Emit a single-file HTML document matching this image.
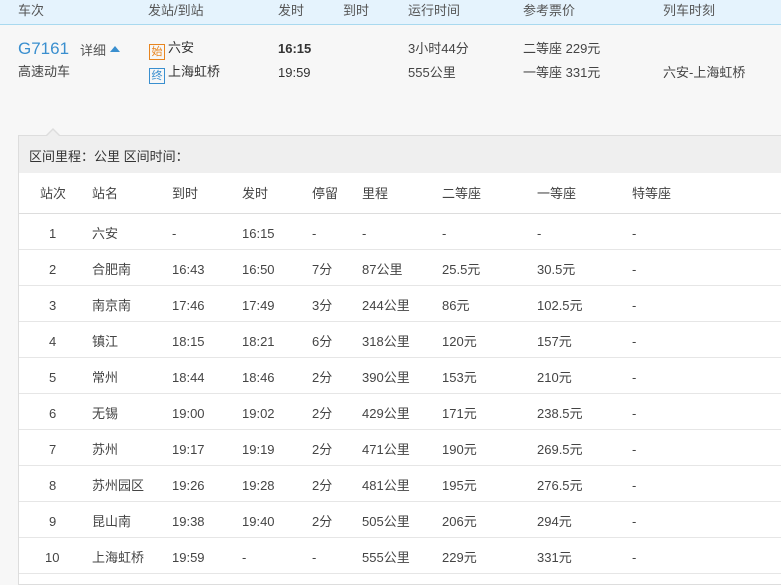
<!DOCTYPE html>
<html><head><meta charset="utf-8"><style>
*{margin:0;padding:0;box-sizing:border-box}
body{width:781px;height:575px;overflow:hidden;background:#f7f7f7;font-family:"Liberation Sans","Noto Sans CJK SC",sans-serif;font-size:13px;line-height:16px;color:#333;position:relative}
.a{position:absolute;white-space:nowrap;line-height:16px}
.hd{position:absolute;left:0;top:0;width:781px;height:25px;background:#e5f3fd;border-bottom:1px solid #a9d9ef;color:#555}
.panel{position:absolute;left:18px;top:135px;width:770px;height:450px;border:1px solid #ddd;background:#fff}
.ph{position:absolute;left:0;top:0;width:100%;height:37px;background:#efefef;color:#333}
.row{position:absolute;left:0;width:100%;height:36px;border-bottom:1px solid #e6e6e6;color:#444}
.row span{position:absolute;top:12px;line-height:16px;white-space:nowrap}
.tag{display:inline-block;width:16px;height:16px;border:1px solid;font-size:11px;line-height:14px;text-align:center;vertical-align:-3px;margin-right:3px}
</style></head><body>
<div class="hd">
<span class="a" style="left:18px;top:3px">车次</span>
<span class="a" style="left:148px;top:3px">发站/到站</span>
<span class="a" style="left:278px;top:3px">发时</span>
<span class="a" style="left:343px;top:3px">到时</span>
<span class="a" style="left:408px;top:3px">运行时间</span>
<span class="a" style="left:523px;top:3px">参考票价</span>
<span class="a" style="left:663px;top:3px">列车时刻</span>
</div>
<span class="a" style="left:18px;top:40px;font-size:17px;line-height:18px;color:#3a8fcf">G7161</span>
<span class="a" style="left:80px;top:43px;color:#555">详细</span>
<span class="a" style="left:110px;top:46px;width:0;height:0;border-left:5px solid transparent;border-right:5px solid transparent;border-bottom:6px solid #3a8fcf"></span>
<span class="a" style="left:18px;top:64px;color:#444">高速动车</span>
<span class="a" style="left:149px;top:40px"><span class="tag" style="color:#e8851f;border-color:#e8851f">始</span>六安</span>
<span class="a" style="left:149px;top:64px"><span class="tag" style="color:#3a8fcf;border-color:#3a8fcf">终</span>上海虹桥</span>
<span class="a" style="left:278px;top:41px;font-weight:bold">16:15</span>
<span class="a" style="left:278px;top:65px">19:59</span>
<span class="a" style="left:408px;top:41px;color:#444">3小时44分</span>
<span class="a" style="left:408px;top:65px;color:#444">555公里</span>
<span class="a" style="left:523px;top:41px;color:#444">二等座 229元</span>
<span class="a" style="left:523px;top:65px;color:#444">一等座 331元</span>
<span class="a" style="left:663px;top:65px;color:#444">六安-上海虹桥</span>
<span class="a" style="left:45px;top:128px;width:0;height:0;border-left:8px solid transparent;border-right:8px solid transparent;border-bottom:8px solid #ddd"></span>
<span class="a" style="left:46px;top:130px;width:0;height:0;border-left:7px solid transparent;border-right:7px solid transparent;border-bottom:7px solid #efefef;z-index:2"></span>
<div class="panel">
<div class="ph"><span class="a" style="left:10px;top:13px">区间里程：公里 区间时间：</span></div>
<div class="row" style="top:37px;height:41px;border-bottom:1px solid #ddd">
<span style="left:21px;top:13px">站次</span><span style="left:73px;top:13px">站名</span><span style="left:153px;top:13px">到时</span><span style="left:223px;top:13px">发时</span><span style="left:293px;top:13px">停留</span><span style="left:343px;top:13px">里程</span><span style="left:423px;top:13px">二等座</span><span style="left:518px;top:13px">一等座</span><span style="left:613px;top:13px">特等座</span>
</div>
<div class="row" style="top:78px"><span style="left:30px">1</span><span style="left:73px">六安</span><span style="left:153px">-</span><span style="left:223px">16:15</span><span style="left:293px">-</span><span style="left:343px">-</span><span style="left:423px">-</span><span style="left:518px">-</span><span style="left:613px">-</span></div>
<div class="row" style="top:114px"><span style="left:30px">2</span><span style="left:73px">合肥南</span><span style="left:153px">16:43</span><span style="left:223px">16:50</span><span style="left:293px">7分</span><span style="left:343px">87公里</span><span style="left:423px">25.5元</span><span style="left:518px">30.5元</span><span style="left:613px">-</span></div>
<div class="row" style="top:150px"><span style="left:30px">3</span><span style="left:73px">南京南</span><span style="left:153px">17:46</span><span style="left:223px">17:49</span><span style="left:293px">3分</span><span style="left:343px">244公里</span><span style="left:423px">86元</span><span style="left:518px">102.5元</span><span style="left:613px">-</span></div>
<div class="row" style="top:186px"><span style="left:30px">4</span><span style="left:73px">镇江</span><span style="left:153px">18:15</span><span style="left:223px">18:21</span><span style="left:293px">6分</span><span style="left:343px">318公里</span><span style="left:423px">120元</span><span style="left:518px">157元</span><span style="left:613px">-</span></div>
<div class="row" style="top:222px"><span style="left:30px">5</span><span style="left:73px">常州</span><span style="left:153px">18:44</span><span style="left:223px">18:46</span><span style="left:293px">2分</span><span style="left:343px">390公里</span><span style="left:423px">153元</span><span style="left:518px">210元</span><span style="left:613px">-</span></div>
<div class="row" style="top:258px"><span style="left:30px">6</span><span style="left:73px">无锡</span><span style="left:153px">19:00</span><span style="left:223px">19:02</span><span style="left:293px">2分</span><span style="left:343px">429公里</span><span style="left:423px">171元</span><span style="left:518px">238.5元</span><span style="left:613px">-</span></div>
<div class="row" style="top:294px"><span style="left:30px">7</span><span style="left:73px">苏州</span><span style="left:153px">19:17</span><span style="left:223px">19:19</span><span style="left:293px">2分</span><span style="left:343px">471公里</span><span style="left:423px">190元</span><span style="left:518px">269.5元</span><span style="left:613px">-</span></div>
<div class="row" style="top:330px"><span style="left:30px">8</span><span style="left:73px">苏州园区</span><span style="left:153px">19:26</span><span style="left:223px">19:28</span><span style="left:293px">2分</span><span style="left:343px">481公里</span><span style="left:423px">195元</span><span style="left:518px">276.5元</span><span style="left:613px">-</span></div>
<div class="row" style="top:366px"><span style="left:30px">9</span><span style="left:73px">昆山南</span><span style="left:153px">19:38</span><span style="left:223px">19:40</span><span style="left:293px">2分</span><span style="left:343px">505公里</span><span style="left:423px">206元</span><span style="left:518px">294元</span><span style="left:613px">-</span></div>
<div class="row" style="top:402px"><span style="left:26px">10</span><span style="left:73px">上海虹桥</span><span style="left:153px">19:59</span><span style="left:223px">-</span><span style="left:293px">-</span><span style="left:343px">555公里</span><span style="left:423px">229元</span><span style="left:518px">331元</span><span style="left:613px">-</span></div>
</div>
</body></html>
